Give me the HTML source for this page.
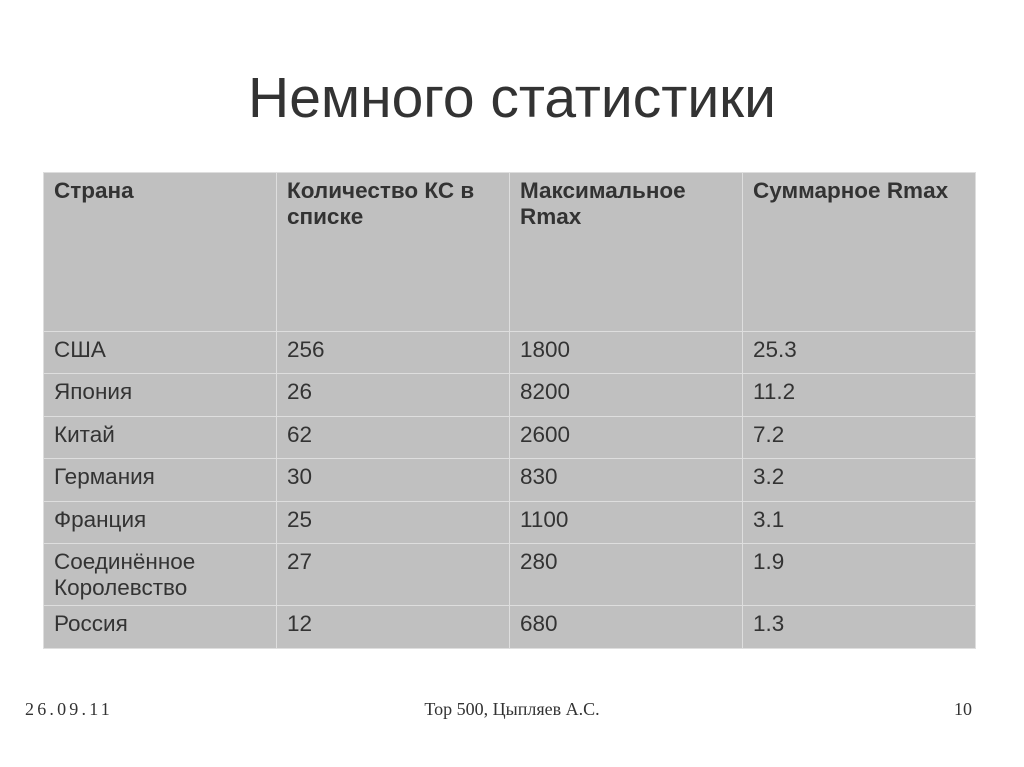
<!DOCTYPE html>
<html><head><meta charset="utf-8"><style>
body{margin:0;width:1024px;height:767px;background:#fff;position:relative;overflow:hidden;font-family:"Liberation Sans",sans-serif;}
h1{position:absolute;top:65px;left:0;width:1024px;text-align:center;margin:0;font-weight:normal;font-size:57px;color:#333;}
table{position:absolute;left:43px;top:172px;border-collapse:collapse;width:933px;table-layout:fixed;}
td{background:#c0c0c0;border:1px solid #dedede;color:#333;font-size:22.5px;vertical-align:top;padding:5px 10px 0 10px;line-height:26px;box-sizing:border-box;overflow:hidden;}
tr:first-child td{font-weight:bold;height:159px;}
.f{position:absolute;top:699px;font-family:"Liberation Serif",serif;font-size:18px;color:#333;}
</style></head><body>
<h1>Немного статистики</h1>
<table>
<tr><td style="width:233px">Страна</td><td style="width:233px">Количество КС в списке</td><td style="width:233px">Максимальное Rmax</td><td>Суммарное Rmax</td></tr>
<tr style="height:42px"><td>США</td><td>256</td><td>1800</td><td>25.3</td></tr>
<tr style="height:43px"><td>Япония</td><td>26</td><td>8200</td><td>11.2</td></tr>
<tr style="height:42px"><td>Китай</td><td>62</td><td>2600</td><td>7.2</td></tr>
<tr style="height:43px"><td>Германия</td><td>30</td><td>830</td><td>3.2</td></tr>
<tr style="height:42px"><td>Франция</td><td>25</td><td>1100</td><td>3.1</td></tr>
<tr style="height:62px"><td>Соединённое Королевство</td><td>27</td><td>280</td><td>1.9</td></tr>
<tr style="height:43px"><td>Россия</td><td>12</td><td>680</td><td>1.3</td></tr>
</table>
<div class="f" style="left:25px;letter-spacing:3.2px">26.09.11</div>
<div class="f" style="left:0;width:1024px;text-align:center">Top 500, Цыпляев А.С.</div>
<div class="f" style="left:954px">10</div>
</body></html>
